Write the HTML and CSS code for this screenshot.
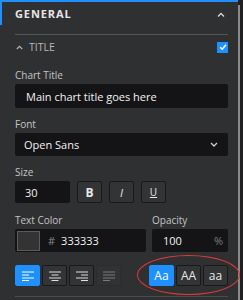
FILE: index.html
```html
<!DOCTYPE html>
<html lang="en">
<head>
    <meta charset="UTF-8">
    <meta name="viewport" content="width=device-width, initial-scale=1.0">
    <title>Chart Settings</title>
    <link rel="stylesheet" href="styles.css">
</head>
<body>
    <div class="panel">
        <div class="content">
            <div class="section-head">
                <span>GENERAL</span>
                <svg class="chev" width="8" height="5" viewBox="0 0 8 5"><path d="M1 4.5 L4 1.5 L7 4.5" fill="none" stroke="#d8d8d8" stroke-width="1.3"/></svg>
            </div>

            <div class="body">
                <div class="divider"></div>

                <div class="sub-head">
                    <svg width="7" height="5" viewBox="0 0 7 5"><path d="M0.8 4 L3.5 1.3 L6.2 4" fill="none" stroke="#b5b5b5" stroke-width="1.2"/></svg>
                    <span class="sub-title">TITLE</span>
                    <span class="check">
                        <svg width="10" height="10" viewBox="0 0 10 10"><path d="M2.2 5.2 L4.2 7.2 L8 2.8" fill="none" stroke="#fff" stroke-width="1.6"/></svg>
                    </span>
                </div>

                <label class="label">Chart Title</label>
                <div class="field">Main chart title goes here</div>

                <label class="label">Font</label>
                <div class="field select">
                    <span>Open Sans</span>
                    <svg width="8" height="5" viewBox="0 0 8 5"><path d="M1 1 L4 4 L7 1" fill="none" stroke="#cfcfcf" stroke-width="1.3"/></svg>
                </div>

                <label class="label">Size</label>
                <div class="row">
                    <div class="field small">30</div>
                    <button class="btn bold">B</button>
                    <button class="btn italic">I</button>
                    <button class="btn under">U</button>
                </div>

                <div class="row two-col">
                    <div class="col-color">
                        <label class="label">Text Color</label>
                        <div class="field color">
                            <span class="swatch"></span>
                            <span class="hash">#</span>
                            <span>333333</span>
                        </div>
                    </div>
                    <div class="col-opacity">
                        <label class="label">Opacity</label>
                        <div class="field opacity">
                            <span>100</span>
                            <span class="pct">%</span>
                        </div>
                    </div>
                </div>

                <div class="row tools">
                    <div class="group">
                        <button class="btn tool active">
                            <svg width="12" height="10" viewBox="0 0 12 10"><path d="M0 1h12M0 4h7M0 7h12M0 9.5h7" stroke="#fff" stroke-width="1"/></svg>
                        </button>
                        <button class="btn tool">
                            <svg width="12" height="10" viewBox="0 0 12 10"><path d="M0 1h12M2.5 4h7M0 7h12M2.5 9.5h7" stroke="#e0e0e0" stroke-width="1"/></svg>
                        </button>
                        <button class="btn tool">
                            <svg width="12" height="10" viewBox="0 0 12 10"><path d="M0 1h12M5 4h7M0 7h12M5 9.5h7" stroke="#e0e0e0" stroke-width="1"/></svg>
                        </button>
                        <button class="btn tool off">
                            <svg width="12" height="10" viewBox="0 0 12 10"><path d="M0 1h12M0 4h12M0 7h12M0 9.5h7" stroke="#7a7a7a" stroke-width="1"/></svg>
                        </button>
                    </div>
                    <div class="group case">
                        <button class="btn tool active">Aa</button>
                        <button class="btn tool">AA</button>
                        <button class="btn tool">aa</button>
                        <span class="ring"></span>
                    </div>
                </div>

                <div class="divider last"></div>
            </div>
        </div>
        <div class="scrollbar"><div class="thumb"></div></div>
    </div>
</body>
</html>
```

FILE: styles.css
```css
body {
    margin: 0;
    font-family: "Open Sans", "Liberation Sans", sans-serif;
    background: #2f3032;
    color: #d4d4d4;
    width: 243px;
    height: 300px;
    overflow: hidden;
}
.panel {
    display: flex;
    height: 300px;
}
.content {
    width: 238px;
    border-top: 2px solid #1e90ff;
    box-sizing: border-box;
}
.section-head {
    display: flex;
    align-items: center;
    justify-content: space-between;
    height: 23px;
    padding: 0 13px 0 13px;
    border-left: 2px solid #1e90ff;
    font-size: 11px;
    font-weight: bold;
    letter-spacing: 0.9px;
    color: #e6e6e6;
}
.chev {
    margin-top: 2px;
}
.body {
    padding: 0 10px 0 15px;
}
.divider {
    height: 1px;
    background: #555658;
    margin-top: 9px;
}
.divider.last {
    margin-top: 10px;
    background: #4a4b4d;
}
.sub-head {
    display: flex;
    align-items: center;
    height: 24px;
    padding-left: 1px;
}
.sub-title {
    margin-left: 6px;
    font-size: 10.5px;
    color: #b8b8b8;
    flex: 1;
}
.check {
    width: 11px;
    height: 11px;
    background: #1e90ff;
    display: flex;
    align-items: center;
    justify-content: center;
}
.label {
    display: block;
    font-size: 10px;
    color: #c4c4c4;
    margin-top: 9px;
    height: 14px;
    line-height: 14px;
}
.field {
    background: #141416;
    border-radius: 2px;
    height: 24px;
    margin-top: 2px;
    display: flex;
    align-items: center;
    padding: 0 11px;
    font-size: 11px;
    color: #f2f2f2;
}
.select {
    justify-content: space-between;
    padding: 0 10px 0 9px;
    height: 23px;
}
.row {
    display: flex;
    align-items: flex-end;
}
.small {
    width: 55px;
    height: 22px;
    box-sizing: border-box;
    padding-left: 10px;
}
.btn {
    width: 25px;
    height: 22px;
    margin-left: 7px;
    background: #333436;
    border: 1px solid #19191b;
    border-radius: 2px;
    color: #e8e8e8;
    font-family: "Open Sans", "Liberation Sans", sans-serif;
    font-size: 11px;
    padding: 0;
    display: flex;
    align-items: center;
    justify-content: center;
}
.bold {
    font-weight: bold;
    font-size: 12px;
}
.italic {
    font-style: italic;
}
.under {
    text-decoration: underline;
    font-size: 10px;
}
.two-col {
    margin-top: 1px;
}
.col-color {
    width: 131px;
}
.col-opacity {
    margin-left: 6px;
    flex: 1;
}
.color {
    padding: 0 2px;
    height: 23px;
}
.swatch {
    width: 21px;
    height: 18px;
    background: #333333;
    border: 1px solid #5a5a5a;
}
.hash {
    color: #8a8a8a;
    margin: 0 6px 0 8px;
}
.opacity {
    height: 23px;
    justify-content: space-between;
    padding: 0 5px 0 11px;
}
.pct {
    color: #7c7c7c;
}
.tools {
    margin-top: 13px;
    justify-content: space-between;
}
.group {
    display: flex;
    gap: 2px;
    position: relative;
}
.tool {
    margin-left: 0;
    height: 21px;
    width: 25px;
}
.tool.active {
    background: #1e90ff;
    border-color: #1e90ff;
    color: #fff;
}
.tool.off {
    background: #313234;
    border-color: #2c2d2f;
}
.case .tool {
    font-size: 12px;
}
.ring {
    position: absolute;
    left: -12px;
    top: -10px;
    width: 103px;
    height: 40px;
    border: 1.3px solid #e0393b;
    border-radius: 50%;
    box-sizing: border-box;
}
.scrollbar {
    width: 5px;
    background: #202022;
}
.thumb {
    width: 2px;
    margin-top: 5px;
    height: 295px;
    background: #8a8a8a;
}
```
